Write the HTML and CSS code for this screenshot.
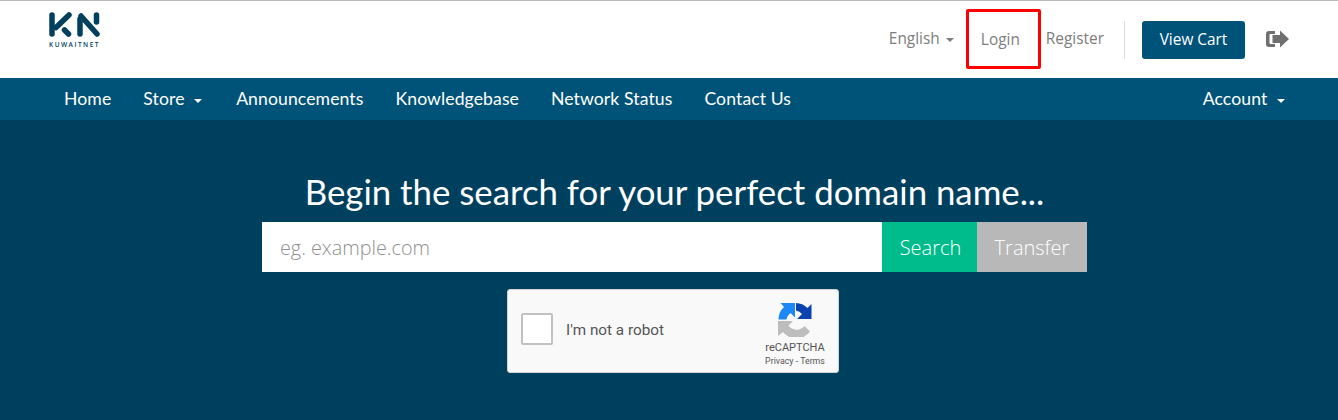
FILE: index.html
```html
<!DOCTYPE html>
<html lang="en">
<head>
<meta charset="utf-8">
<title>KuwaitNet</title>
<link rel="stylesheet" href="styles.css">
</head>
<body>
<header class="topbar">
  <a class="logo" href="#">
    <svg class="logo-mark" width="53" height="27" viewBox="0 0 53 27" aria-hidden="true">
      <g fill="none" stroke="#01405e" stroke-width="5.500" stroke-linecap="round" stroke-linejoin="round">
        <path d="M4 4V23"/>
        <path d="M21 4L8 16.500"/>
        <path d="M16.500 19L20.500 23"/>
        <path d="M32 23V8"/>
        <path d="M33 5L49 23"/>
        <path d="M48.500 4V11"/>
      </g>
    </svg>
    <span class="logo-text">KUWAITNET</span>
  </a>
  <div class="top-actions">
    <a class="top-link lang" href="#">English <span class="caret caret-grey"></span></a>
    <a class="top-link login" href="#">Login</a>
    <a class="top-link register" href="#">Register</a>
    <span class="divider"></span>
    <a class="cart" href="#">View Cart</a>
    <svg class="logout" width="24" height="18" viewBox="0 0 24 18" aria-hidden="true">
      <path fill="#6f6f6f" d="M3 1h6v3H4.500A1 1 0 0 0 3.500 5v8a1 1 0 0 0 1 1H9v3H3a3 3 0 0 1-3-3V4a3 3 0 0 1 3-3z"/>
      <path fill="#6f6f6f" d="M14 0.500L23 9l-9 8.500V13H6.500V5H14z"/>
    </svg>
  </div>
</header>
<nav class="mainnav">
  <ul class="nav-list">
    <li><a href="#">Home</a></li>
    <li class="has-menu"><a href="#">Store <span class="caret"></span></a></li>
    <li><a href="#">Announcements</a></li>
    <li><a href="#">Knowledgebase</a></li>
    <li><a href="#">Network Status</a></li>
    <li><a href="#">Contact Us</a></li>
  </ul>
  <a class="account" href="#">Account <span class="caret"></span></a>
</nav>
<main class="hero">
  <h1 class="hero-title">Begin the search for your perfect domain name...</h1>
  <form class="search">
    <input class="search-input" type="text" placeholder="eg. example.com">
    <button class="btn btn-search" type="button">Search</button>
    <button class="btn btn-transfer" type="button">Transfer</button>
  </form>
  <div class="captcha">
    <span class="captcha-box"></span>
    <span class="captcha-label">I'm not a robot</span>
    <div class="captcha-brand">
      <svg class="captcha-icon" width="34" height="34" viewBox="0 0 34 34" aria-hidden="true">
        <path fill="#bdbdbd" d="M0 18H15L10.500 22.500A10 10 0 0 0 26.500 23L32 28.500A17 17 0 0 1 5 29L0 33Z"/>
        <path fill="#1c87f5" d="M0.500 16.500A17 17 0 0 1 6 4L2.500 0H17V14.500L12.500 10A10 10 0 0 0 8.500 16.500Z"/>
        <path fill="#0a43b0" d="M18 0A17 17 0 0 1 29.500 5L33.500 1V16H19L24 11A10 10 0 0 0 18 7.500Z"/>
      </svg>
      <span class="captcha-name">reCAPTCHA</span>
      <span class="captcha-terms">Privacy - Terms</span>
    </div>
  </div>
</main>
</body>
</html>
```
FILE: styles.css
```css
* { box-sizing: border-box; }
html, body { margin: 0; padding: 0; }
body {
  width: 1338px;
  height: 420px;
  overflow: hidden;
  background: #00405f;
  font-family: "Open Sans", sans-serif;
}
a { text-decoration: none; color: inherit; }

.topbar {
  height: 78px;
  background: #fff;
  border-top: 1px solid #b9b9b9;
  display: flex;
  justify-content: space-between;
  padding: 0 48px;
}
.logo { display: flex; flex-direction: column; padding-top: 10px; }
.logo-mark { display: block; }
.logo-text {
  font-family: "Open Sans", sans-serif;
  font-size: 6.500px;
  font-weight: 600;
  letter-spacing: 1.500px;
  line-height: 8px;
  margin: 3px 0 0 1px;
  color: #01405e;
  white-space: nowrap;
}
.top-actions { display: flex; align-items: flex-start; }
.top-link { font-size: 15.400px; color: #7d7d7d; line-height: 20px; white-space: nowrap; }
.lang { margin-top: 28px; width: 77px; }
.login {
  width: 75px;
  height: 60px;
  margin-top: 8px;
  padding: 18px 0 0 12px;
  border: 3px solid #f00;
  border-radius: 2px;
  margin-right: 5px;
}
.register { margin-top: 28px; }
.divider { width: 1px; height: 38px; background: #dcdcdc; margin: 20px 17px 0 20px; }
.cart {
  width: 103px;
  height: 38px;
  margin-top: 20px;
  background: #005378;
  color: #fff;
  border-radius: 3px;
  font-size: 15.400px;
  line-height: 37px;
  text-align: center;
}
.logout { margin: 29px 0 0 21px; }

.caret {
  display: inline-block;
  width: 0;
  height: 0;
  margin-left: 5px;
  vertical-align: 2px;
  border-top: 4.500px solid #fff;
  border-left: 4.500px solid transparent;
  border-right: 4.500px solid transparent;
}
.caret-grey {
  margin-left: 2px;
  border-top: 4px solid #7d7d7d;
  border-left-width: 4px;
  border-right-width: 4px;
}

.mainnav {
  height: 42px;
  background: #005378;
  display: flex;
  justify-content: space-between;
  align-items: center;
  padding: 0 53px 2px 64px;
  color: #fff;
  font-family: "Lato", sans-serif;
  font-size: 17.600px;
  letter-spacing: 0.100px;
}
.nav-list { display: flex; gap: 32px; list-style: none; margin: 0; padding: 0; }
.has-menu { padding-right: 2px; }

.hero { display: flex; flex-direction: column; align-items: center; }
.hero-title {
  margin: 51px 0 0 11px;
  font-family: "Lato", sans-serif;
  font-size: 34.800px;
  font-weight: 400;
  line-height: 42px;
  color: #fff;
  white-space: nowrap;
}
.search { display: flex; height: 50px; margin: 9px 0 0 11px; }
.search-input {
  width: 620px;
  height: 50px;
  border: 0;
  padding: 0 18px;
  background: #fff;
  font-family: "Open Sans", sans-serif;
  font-size: 19.800px;
  font-weight: 300;
  outline: none;
}
.search-input::placeholder { color: #8f8f8f; opacity: 1; }
.btn {
  height: 50px;
  border: 0;
  color: #fff;
  padding: 0;
  font-family: "Open Sans", sans-serif;
  font-size: 20px;
  font-weight: 300;
}
.btn-search { width: 95px; padding-left: 2px; background: #00bc8c; }
.btn-transfer { width: 110px; background: #b8b8b8; }

.captcha {
  width: 332px;
  height: 84px;
  margin: 17px 0 0 8px;
  background: #f9f9f9;
  border: 1px solid #d3d3d3;
  border-radius: 3px;
  display: flex;
  align-items: center;
  font-family: "Roboto", sans-serif;
}
.captcha-box {
  width: 32px;
  height: 32px;
  margin: 0 0 4px 13px;
  background: #fff;
  border: 2px solid #c1c1c1;
  border-radius: 2px;
}
.captcha-label { margin: 0 0 2px 13px; font-size: 15.300px; color: #555; }
.captcha-brand {
  margin: 8px 11px 0 auto;
  width: 64px;
  display: flex;
  flex-direction: column;
  align-items: center;
  color: #555;
}
.captcha-icon { margin-bottom: 4px; }
.captcha-name { font-size: 11px; line-height: 14px; }
.captcha-terms { font-size: 8.800px; line-height: 12px; white-space: nowrap; }
```
